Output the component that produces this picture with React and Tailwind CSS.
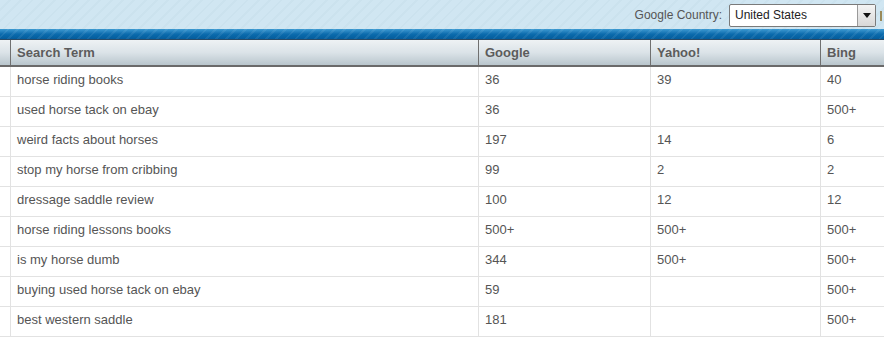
import React from 'react';

const rows = [
    ['horse riding books', '36', '39', '40'],
    ['used horse tack on ebay', '36', '', '500+'],
    ['weird facts about horses', '197', '14', '6'],
    ['stop my horse from cribbing', '99', '2', '2'],
    ['dressage saddle review', '100', '12', '12'],
    ['horse riding lessons books', '500+', '500+', '500+'],
    ['is my horse dumb', '344', '500+', '500+'],
    ['buying used horse tack on ebay', '59', '', '500+'],
    ['best western saddle', '181', '', '500+'],
];

const cols = 'grid grid-cols-[10px_468px_172px_170px_170px]';

const App = () => {
    return (
        <div className="w-[884px] h-[342px] overflow-hidden bg-white font-['Liberation_Sans',Arial,sans-serif]">
            {/* Top toolbar */}
            <div className="h-[29px] flex items-center justify-end bg-[#cfe5f1] bg-[repeating-linear-gradient(135deg,#d0e6f2_0px,#d0e6f2_6px,#cbe2ee_6px,#cbe2ee_8px)]">
                <span className="text-[12px] text-[#555] mr-[7px]">Google Country:</span>
                <div className="w-[147px] h-[23px] mt-[2px] flex bg-white border border-[#7a7a7a] rounded-[2px]">
                    <span className="flex-1 text-[12px] text-[#222] pl-[5px] leading-[21px]">United States</span>
                    <div className="w-[18px] border-l border-[#9a9a9a] bg-gradient-to-b from-[#f4f4f4] to-[#d8d8d8] flex items-center justify-center">
                        <svg width="8" height="5" viewBox="0 0 8 5"><path d="M0 0h8L4 5z" fill="#111" /></svg>
                    </div>
                </div>
                <div className="w-[4px] h-[10px] ml-[4px] mt-[2px] border-l-2 border-[#9a8a5a]"></div>
            </div>

            {/* Blue band */}
            <div className="h-[11px] bg-gradient-to-b from-[#3c9bd2] via-[#0b6cae] to-[#045c9c] border-b border-[#2a4a66]">
                <div className="h-full bg-[repeating-linear-gradient(135deg,transparent_0px,transparent_5px,rgba(255,255,255,0.07)_5px,rgba(255,255,255,0.07)_7px)]"></div>
            </div>

            {/* Header */}
            <div className={`${cols} h-[27px] bg-gradient-to-b from-[#eef2f4] via-[#dbe3e8] to-[#b9c6cd] border-b-2 border-[#6a6a6a] text-[13px] font-bold text-[#5c5c5c]`}>
                <div></div>
                {['Search Term', 'Google', 'Yahoo!', 'Bing'].map((h) => (
                    <div key={h} className="border-l border-[#707070] pl-[6px] flex items-center pt-[1px]">{h}</div>
                ))}
            </div>

            {/* Body */}
            {rows.map((r, i) => (
                <div key={i} className={`${cols} h-[30px] border-b border-[#e2e2e2] text-[13px] text-[#555]`}>
                    <div></div>
                    {r.map((c, j) => (
                        <div key={j} className="border-l border-[#e2e2e2] pl-[6px] flex items-center pb-[4px]">{c}</div>
                    ))}
                </div>
            ))}
        </div>
    );
};

export default App;
